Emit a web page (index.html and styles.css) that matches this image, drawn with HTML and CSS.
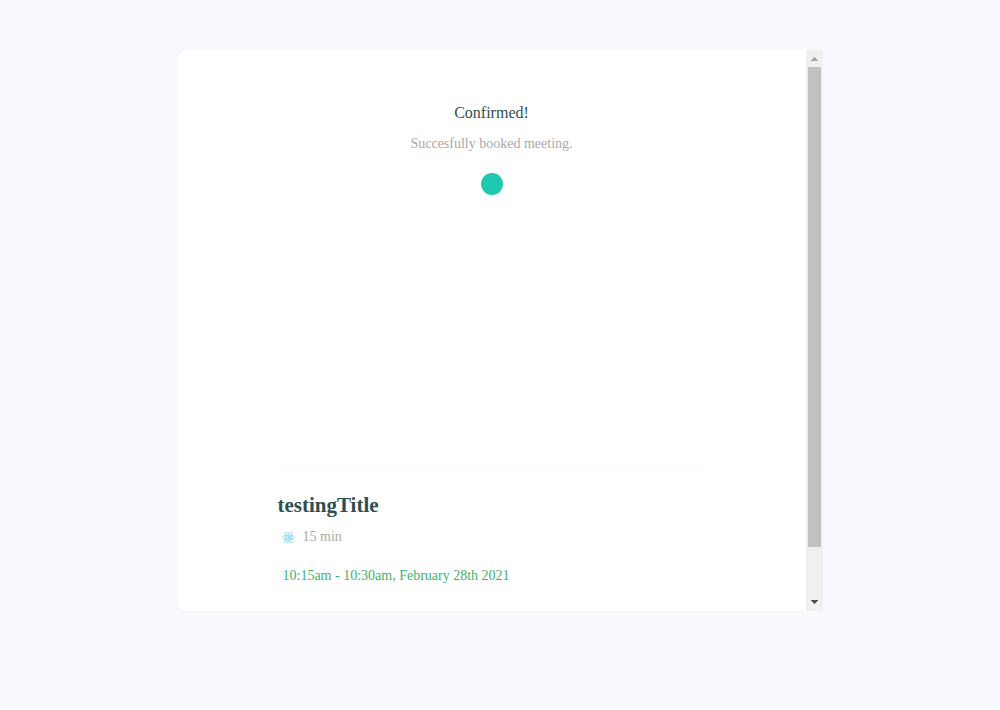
FILE: index.html
```html
<!DOCTYPE html>
<html lang="en">
<head>
<meta charset="utf-8">
<meta name="viewport" content="width=device-width, initial-scale=1">
<title>Confirmed</title>
<link rel="stylesheet" href="styles.css">
</head>
<body>
<main class="card">
  <div class="content">
    <header class="status">
      <p class="status-title">Confirmed!</p>
      <p class="status-text">Succesfully booked meeting.</p>
      <span class="dot"></span>
    </header>
    <section class="event">
      <h1 class="event-title">testingTitle</h1>
      <p class="duration">
        <svg class="logo" viewBox="0 0 24 24" fill="none" stroke="#61dafb" stroke-width="1.3" aria-hidden="true">
          <ellipse cx="12" cy="12" rx="11" ry="4.3"/>
          <ellipse cx="12" cy="12" rx="11" ry="4.3" transform="rotate(60 12 12)"/>
          <ellipse cx="12" cy="12" rx="11" ry="4.3" transform="rotate(120 12 12)"/>
          <circle cx="12" cy="12" r="2.2" fill="#61dafb" stroke="none"/>
        </svg>
        15 min
      </p>
      <p class="time">10:15am - 10:30am, February 28th 2021</p>
    </section>
  </div>
  <div class="scrollbar" aria-hidden="true">
    <svg class="arrow" viewBox="0 0 17 17" shape-rendering="crispEdges"><path d="M8 7h1v1h1v1h1v1h1v1H5v-1h1V9h1V8h1z" fill="#a3a3a3"/></svg>
    <div class="track"><div class="thumb"></div></div>
    <svg class="arrow" viewBox="0 0 17 17" shape-rendering="crispEdges"><path d="M5 6h7v1h-1v1h-1v1H9v1H8V9H7V8H6V7H5z" fill="#505050"/></svg>
  </div>
</main>
</body>
</html>
```
FILE: styles.css
```css
* { box-sizing: border-box; }

body {
  margin: 0;
  padding: 50px 16px;
  background: #f8f9ff;
  color: darkslategray;
  font-family: "Liberation Serif", "Times New Roman", serif;
}

p, h1 { margin: 0; }

.card {
  display: flex;
  max-width: 645px;
  margin: 0 auto;
  background: #fff;
  border-radius: 10px 0 0 10px;
}

.content {
  flex: 1;
  padding: 50px 100px 23px;
}

.status {
  display: flex;
  flex-direction: column;
  align-items: center;
  min-height: 369px;
}

.status-title {
  font-size: 16px;
  line-height: 26px;
}

.status-text {
  margin-top: 6px;
  font-size: 14px;
  line-height: 24px;
  color: darkgray;
}

.dot {
  width: 22px;
  height: 22px;
  margin-top: 17px;
  border-radius: 50%;
  background: #1dcaad;
}

.event {
  border-top: 1px solid #f8f8f8;
  padding-top: 23px;
}

.event-title {
  font-size: 21px;
  line-height: 24px;
}

.duration {
  display: flex;
  align-items: center;
  gap: 8px;
  margin-top: 8px;
  padding-left: 4px;
  font-size: 14px;
  line-height: 24px;
  color: darkgray;
}

.logo {
  width: 13px;
  height: 13px;
}

.time {
  margin-top: 15px;
  padding-left: 5px;
  font-size: 14px;
  line-height: 24px;
  color: mediumseagreen;
}

.scrollbar {
  display: flex;
  flex-direction: column;
  width: 17px;
  background: #f0f0f0;
}

.arrow {
  width: 17px;
  height: 17px;
}

.track {
  flex: 1;
  padding: 0 2px;
}

.thumb {
  height: 91%;
  background: #c1c1c1;
}
```
